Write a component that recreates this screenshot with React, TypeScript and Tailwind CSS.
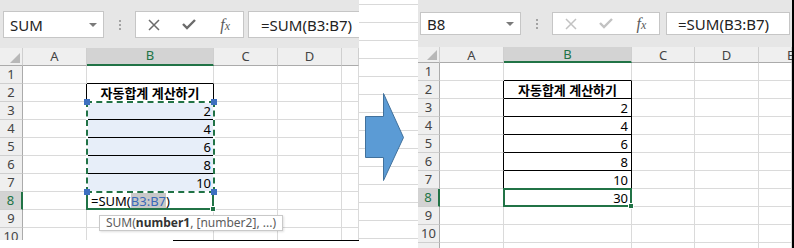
import type { ReactNode } from "react";

const UI_FONT = "font-['Noto_Sans',sans-serif]";
const CELL_FONT = "font-['Noto_Sans','Noto_Sans_CJK_KR',sans-serif]";

// grid line colours
const R_GRAY = "border-r-[#dadada]";
const B_GRAY = "border-b-[#dadada]";
const R_BLACK = "border-r-black";
const B_BLACK = "border-b-black";

const HEAD = "flex items-center justify-center bg-[#efefef] text-[13px] text-[#444] border-r border-b";
const COL_HEAD = `${HEAD} border-r-[#cfcfcf] border-b-[#ababab]`;
const COL_HEAD_SEL = "flex items-center justify-center bg-[#d3d3d3] text-[13px] text-[#217346] border-r border-r-[#cfcfcf] border-b-2 border-b-[#217346]";
const ROW_HEAD = `${HEAD} border-r-[#ababab] border-b-[#cfcfcf]`;
const ROW_HEAD_SEL = "flex items-center justify-center bg-[#d3d3d3] text-[13px] text-[#217346] border-b border-b-[#cfcfcf] border-r-2 border-r-[#217346]";

function Cell({
  right = R_GRAY,
  bottom = B_GRAY,
  className = "",
  children,
}: {
  right?: string;
  bottom?: string;
  className?: string;
  children?: ReactNode;
}) {
  return (
    <div className={`border-r border-b ${right} ${bottom} text-[13px] leading-[18px] text-black ${className}`}>
      {children}
    </div>
  );
}

function Corner() {
  return (
    <div className={`${COL_HEAD} !items-end !justify-end pb-[2px] pr-[2px]`}>
      <svg width="10" height="10" viewBox="0 0 10 10">
        <path d="M10 0V10H0Z" fill="#b8b8b8" />
      </svg>
    </div>
  );
}

function FormulaBar({ name, editing }: { name: string; editing: boolean }) {
  const iconColor = editing ? "#6b6b6b" : "#c2c2c2";
  return (
    <div
      className={
        editing
          ? `flex h-[48px] bg-[#e6e6e6] pb-[10px] pl-[3px] pt-[11px] ${UI_FONT}`
          : `flex h-[47px] bg-[#e6e6e6] pb-[12px] pl-[2px] pt-[12px] ${UI_FONT}`
      }
    >
      {/* Name box */}
      <div className="flex w-[101px] items-center justify-between border border-[#c6c6c6] bg-white pl-[6px] pr-[6px]">
        <span className="text-[15px] leading-[20px] text-[#222]">{name}</span>
        <svg width="8" height="4" viewBox="0 0 8 4">
          <path d="M0 0H8L4 4Z" fill="#7a7a7a" />
        </svg>
      </div>

      <div className="flex w-[31px] flex-col items-center justify-center gap-[2px]">
        <span className="h-[2px] w-[2px] bg-[#a3a3a3]" />
        <span className="h-[2px] w-[2px] bg-[#a3a3a3]" />
        <span className="h-[2px] w-[2px] bg-[#a3a3a3]" />
      </div>

      {/* Cancel / enter / fx */}
      <div
        className={
          editing
            ? "grid w-[109px] grid-cols-3 items-center justify-items-center border border-[#c6c6c6] bg-white"
            : "grid w-[108px] grid-cols-3 items-center justify-items-center border border-[#c6c6c6] bg-white"
        }
      >
        <svg width="12" height="12" viewBox="0 0 12 12" fill="none" stroke={iconColor} strokeWidth="1.5">
          <path d="M1 1L11 11M11 1L1 11" />
        </svg>
        <svg width="14" height="11" viewBox="0 0 14 11" fill="none" stroke={iconColor} strokeWidth="2.4">
          <path d="M1 5L5 9L13 1" />
        </svg>
        <span className="font-['Liberation_Serif',serif] text-[16px] italic leading-none text-[#5a5a5a]">
          f<span className="text-[12px]">x</span>
        </span>
      </div>

      {/* Formula */}
      <div
        className={
          editing
            ? "ml-[4px] flex flex-1 items-center border border-r-0 border-[#c6c6c6] bg-white pl-[12px]"
            : "ml-[6px] mr-[2px] flex flex-1 items-center border border-[#c6c6c6] bg-white pl-[11px]"
        }
      >
        <span className="whitespace-nowrap text-[15px] leading-[20px] text-[#222]">=SUM(B3:B7)</span>
      </div>
    </div>
  );
}

function ActiveBorder() {
  return (
    <>
      <div className="pointer-events-none absolute -inset-[1px] border-2 border-[#217346]" />
      <div className="absolute -bottom-[3px] -right-[3px] h-[6px] w-[6px] border border-white bg-[#217346]" />
    </>
  );
}

function EditingSheet() {
  const values = [2, 4, 6, 8, 10];
  return (
    <div className={`grid auto-rows-[18px] grid-cols-[23px_64px_127px_64px_64px_17px] ${CELL_FONT}`}>
      <Corner />
      <div className={COL_HEAD}>A</div>
      <div className={COL_HEAD_SEL}>B</div>
      <div className={COL_HEAD}>C</div>
      <div className={COL_HEAD}>D</div>
      <div className={COL_HEAD} />

      {/* row 1 */}
      <div className={ROW_HEAD}>1</div>
      <Cell />
      <Cell bottom={B_BLACK} />
      <Cell />
      <Cell />
      <Cell />

      {/* row 2 */}
      <div className={ROW_HEAD}>2</div>
      <Cell right={R_BLACK} />
      <Cell right={R_BLACK} bottom={B_BLACK} className="text-center font-bold">
        자동합계 계산하기
      </Cell>
      <Cell />
      <Cell />
      <Cell />

      {/* rows 3-7, B3:B7 is the referenced range */}
      {values.map((v, i) => (
        <div key={v} className="contents">
          <div className={ROW_HEAD}>{i + 3}</div>
          <Cell right={R_BLACK} />
          {i === 0 && (
            <div className="relative z-30 row-span-5 bg-[#e7eef9]">
              {values.map((n) => (
                <Cell key={n} right={R_BLACK} bottom={B_BLACK} className="h-[18px] pr-[2px] text-right">
                  {n}
                </Cell>
              ))}
              <div className="pointer-events-none absolute -inset-[1px] border-2 border-white" />
              <div className="pointer-events-none absolute -inset-[1px] border-2 border-dashed border-[#217346]" />
              <div className="absolute -left-[3px] -top-[3px] h-[6px] w-[6px] bg-[#3e70c0]" />
              <div className="absolute -right-[3px] -top-[3px] h-[6px] w-[6px] bg-[#3e70c0]" />
              <div className="absolute -bottom-[3px] -left-[3px] h-[6px] w-[6px] bg-[#3e70c0]" />
              <div className="absolute -bottom-[3px] -right-[3px] h-[6px] w-[6px] bg-[#3e70c0]" />
            </div>
          )}
          <Cell />
          <Cell />
          <Cell />
        </div>
      ))}

      {/* row 8 */}
      <div className={ROW_HEAD_SEL}>8</div>
      <Cell />
      <Cell className="relative z-20 whitespace-nowrap pl-[4px]">
        =SUM(<span className="bg-[#c8c8c8] text-[#3a68b8]">B3:B7</span>)
        <ActiveBorder />
        <div className={`absolute left-[12px] top-[23px] whitespace-nowrap border border-[#c9c9c9] bg-white px-[6px] text-[12px] leading-[14px] text-[#5c5c5c] shadow-[1px_1px_2px_rgba(0,0,0,0.12)] ${UI_FONT}`}>
          SUM(<span className="font-bold text-[#333]">number1</span>, [number2], ...)
        </div>
      </Cell>
      <Cell />
      <Cell />
      <Cell />

      {[9, 10].map((r) => (
        <div key={r} className="contents">
          <div className={ROW_HEAD}>{r}</div>
          <Cell />
          <Cell />
          <Cell />
          <Cell />
          <Cell />
        </div>
      ))}
    </div>
  );
}

function DoneSheet() {
  const values = [2, 4, 6, 8, 10];
  return (
    <div className={`grid grid-cols-[22px_64px_128px_63px_64px_33px] grid-rows-[16px] auto-rows-[18px] ${CELL_FONT}`}>
      <Corner />
      <div className={`${COL_HEAD} leading-[16px]`}>A</div>
      <div className={`${COL_HEAD_SEL} leading-[16px]`}>B</div>
      <div className={`${COL_HEAD} leading-[16px]`}>C</div>
      <div className={`${COL_HEAD} leading-[16px]`}>D</div>
      <div className={`${COL_HEAD} !justify-start pl-[28px] leading-[16px]`}>E</div>

      <div className={ROW_HEAD}>1</div>
      <Cell />
      <Cell bottom={B_BLACK} />
      <Cell />
      <Cell />
      <Cell />

      <div className={ROW_HEAD}>2</div>
      <Cell right={R_BLACK} />
      <Cell right={R_BLACK} bottom={B_BLACK} className="text-center font-bold">
        자동합계 계산하기
      </Cell>
      <Cell />
      <Cell />
      <Cell />

      {values.map((v, i) => (
        <div key={v} className="contents">
          <div className={ROW_HEAD}>{i + 3}</div>
          <Cell right={R_BLACK} />
          <Cell right={R_BLACK} bottom={B_BLACK} className="pr-[3px] text-right">
            {v}
          </Cell>
          <Cell />
          <Cell />
          <Cell />
        </div>
      ))}

      <div className={ROW_HEAD_SEL}>8</div>
      <Cell />
      <Cell className="relative z-20 pr-[3px] text-right">
        30
        <ActiveBorder />
      </Cell>
      <Cell />
      <Cell />
      <Cell />

      {[9, 10].map((r) => (
        <div key={r} className="contents">
          <div className={ROW_HEAD}>{r}</div>
          <Cell />
          <Cell />
          <Cell />
          <Cell />
          <Cell />
        </div>
      ))}
      {/* partially visible row 11 */}
      <div className={ROW_HEAD} />
      <Cell />
      <Cell />
      <Cell />
      <Cell />
      <Cell />
    </div>
  );
}

export default function App() {
  return (
    <div className="flex h-[248px] w-[794px] overflow-hidden bg-white">
      {/* Before */}
      <div className="flex w-[359px] shrink-0 flex-col">
        <div className="h-[240px] overflow-hidden">
          <FormulaBar name="SUM" editing />
          <EditingSheet />
        </div>
        <div className="ml-[173px] flex-1 border-t border-black" />
      </div>

      {/* Arrow */}
      <div className="relative w-[59px] shrink-0 pt-[4px]">
        {Array.from({ length: 14 }).map((_, i) => (
          <div key={i} className="h-[18px] border-t border-[#d9d9d9]" />
        ))}
        <svg className="absolute left-[6px] top-[93px]" width="40" height="89" viewBox="0 0 40 89">
          <path d="M0.5 23.5H18.5V0.5L38.5 44.5L18.5 87.5V64.5H0.5Z" fill="#5b9bd5" stroke="#41719c" />
        </svg>
      </div>

      {/* After */}
      <div className="h-[248px] w-[376px] shrink-0 overflow-hidden border-r-2 border-black">
        <FormulaBar name="B8" editing={false} />
        <DoneSheet />
      </div>
    </div>
  );
}
